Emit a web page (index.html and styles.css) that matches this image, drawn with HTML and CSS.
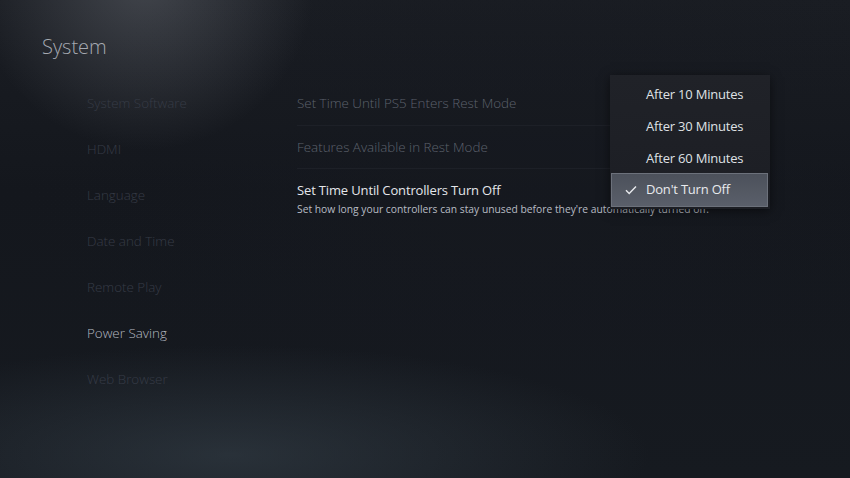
FILE: index.html
```html
<!DOCTYPE html>
<html lang="en">
<head>
    <meta charset="UTF-8">
    <title>System</title>
    <link rel="stylesheet" href="styles.css">
</head>
<body>
    <div class="screen">
        <div class="header">
            <h1>System</h1>
        </div>
        <div class="main">
            <ul class="nav">
                <li>System Software</li>
                <li>HDMI</li>
                <li>Language</li>
                <li>Date and Time</li>
                <li>Remote Play</li>
                <li class="active">Power Saving</li>
                <li>Web Browser</li>
            </ul>
            <div class="settings">
                <div class="row">Set Time Until PS5 Enters Rest Mode</div>
                <div class="row">Features Available in Rest Mode</div>
                <div class="row focus">
                    <div class="title">Set Time Until Controllers Turn Off</div>
                    <div class="desc">Set how long your controllers can stay unused before they're automatically turned off.</div>
                </div>
            </div>
        </div>

        <div class="menu">
            <div class="option">After 10 Minutes</div>
            <div class="option">After 30 Minutes</div>
            <div class="option">After 60 Minutes</div>
            <div class="option selected">
                <svg class="check" width="12" height="10" viewBox="0 0 12 10">
                    <path d="M1 5.2 L4.2 8.4 L11 1.4" fill="none" stroke="#e8eaee" stroke-width="1.4"/>
                </svg>
                Don't Turn Off
            </div>
        </div>
    </div>
</body>
</html>
```

FILE: styles.css
```css
body {
    margin: 0;
    padding: 0;
    font-family: 'Open Sans', 'Noto Sans', sans-serif;
    font-weight: 300;
    background-color: #12151b;
}

.screen {
    position: relative;
    width: 850px;
    height: 478px;
    overflow: hidden;
    background:
        radial-gradient(ellipse 170px 170px at 145px -20px, rgba(120, 124, 132, 0.42), rgba(120, 124, 132, 0) 100%),
        radial-gradient(ellipse 420px 110px at 230px 455px, rgba(60, 72, 82, 0.5), rgba(60, 72, 82, 0) 100%),
        radial-gradient(ellipse 500px 300px at 520px 200px, rgba(22, 25, 32, 0.6), rgba(22, 25, 32, 0) 100%),
        linear-gradient(180deg, #1a1d23 0%, #14171d 40%, #161a20 100%);
}

.header {
    height: 80px;
    box-sizing: border-box;
    padding: 33px 0 0 42px;
}

.header h1 {
    margin: 0;
    font-size: 20px;
    line-height: 28px;
    font-weight: 300;
    color: #a6aab2;
}

.main {
    display: flex;
}

.nav {
    list-style: none;
    margin: 0;
    padding: 0 0 0 87px;
    width: 210px;
}

.nav li {
    height: 46px;
    line-height: 46px;
    font-size: 13.4px;
    color: #363b46;
}

.nav li.active {
    color: #b4b8c0;
}

.settings {
    width: 313px;
}

.row {
    height: 45px;
    line-height: 46px;
    font-size: 13.4px;
    color: #5c616c;
    border-bottom: 1px solid #1d2027;
}

.row + .row {
    height: 42px;
    line-height: 42px;
}

.row.focus {
    height: auto;
    line-height: normal;
    border-bottom: none;
    padding-top: 11px;
}

.focus .title {
    font-size: 13px;
    line-height: 20px;
    letter-spacing: -0.15px;
    color: #e4e6ea;
    font-weight: 400;
}

.focus .desc {
    margin-top: 2px;
    font-size: 10.3px;
    line-height: 15px;
    color: #b8bcc4;
    white-space: nowrap;
    font-weight: 400;
}

.menu {
    position: absolute;
    left: 610px;
    top: 75px;
    width: 160px;
    box-sizing: border-box;
    padding: 3px 2px 2px 1px;
    background: linear-gradient(180deg, #202228 0%, #1c1e24 100%);
    box-shadow: 0 2px 10px rgba(0, 0, 0, 0.5);
}

.option {
    position: relative;
    height: 32px;
    line-height: 32px;
    padding-left: 35px;
    font-size: 13px;
    letter-spacing: -0.2px;
    font-weight: 400;
    color: #dfe1e5;
}

.option.selected {
    height: 34px;
    line-height: 31px;
    box-sizing: border-box;
    margin-top: -1px;
    border: 1px solid #6c717b;
    padding-left: 34px;
    background: linear-gradient(180deg, #4c515b 0%, #5a5f6a 100%);
    color: #e8eaee;
}

.check {
    position: absolute;
    left: 13px;
    top: 11px;
}
```
